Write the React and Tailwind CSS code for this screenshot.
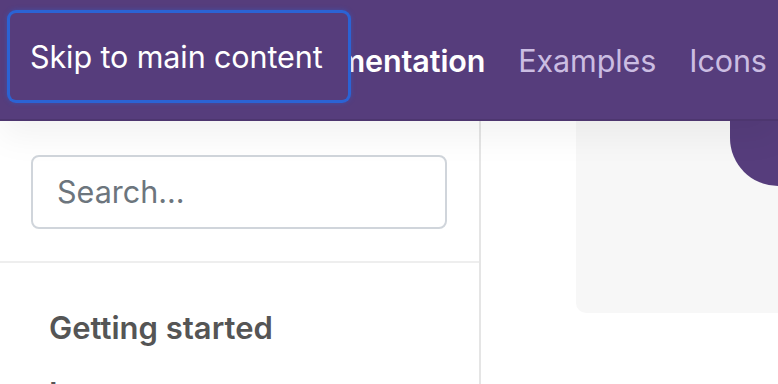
export default function App() {
  return (
    <div className="relative w-[778px] h-[384px] overflow-hidden bg-white font-['Inter','Helvetica_Neue',Arial,sans-serif]">
      {/* top navbar */}
      <header className="relative z-10 h-[121px] bg-[#563d7c] flex items-center shadow-[0_16px_32px_rgba(0,0,0,0.05),inset_0_-2px_0_rgba(0,0,0,0.1)]">
        <nav className="flex items-center gap-[33px] pl-[261px] pt-[1px] text-[30.5px] tracking-[-0.1px]">
          <a className="font-semibold text-white">Documentation</a>
          <a className="text-[#cbbde2]">Examples</a>
          <a className="text-[#cbbde2]">Icons</a>
        </nav>

        {/* skip link, focused */}
        <a className="absolute left-[10px] top-[13px] w-[338px] h-[87px] flex items-center pl-[20px] rounded-[6px] bg-[#563d7c] text-white text-[30.5px] tracking-[-0.1px] ring-[3px] ring-[#2b63d4] shadow-[0_0_5px_3px_rgba(43,99,212,0.45)]">
          Skip to main content
        </a>
      </header>

      <div className="flex h-[263px]">
        {/* sidebar */}
        <aside className="w-[481px] shrink-0 border-r-2 border-[#e5e5e5]">
          <div className="pt-[34px] pb-[32px] px-[31px] border-b-2 border-[#eeeeee]">
            <input
              placeholder="Search..."
              className="w-[416px] h-[74px] px-[24px] pb-[2px] rounded-[8px] border-2 border-[#d0d5db] text-[30.5px] text-[#495057] placeholder:text-[#6c757d] outline-none"
            />
          </div>
          <div className="pt-[45px] pl-[49px] flex flex-col gap-[26px] text-[31px] leading-[40px] font-semibold text-[#555555]">
            <span>Getting started</span>
            <span>Layout</span>
          </div>
        </aside>

        {/* main */}
        <main className="flex-1 pl-[95px]">
          <div className="h-[192px] bg-[#f7f7f7] rounded-bl-[10px] flex justify-end items-start">
            <div className="w-[48px] h-[65px] bg-[#563d7c] rounded-bl-[48px]" />
          </div>
        </main>
      </div>
    </div>
  )
}
